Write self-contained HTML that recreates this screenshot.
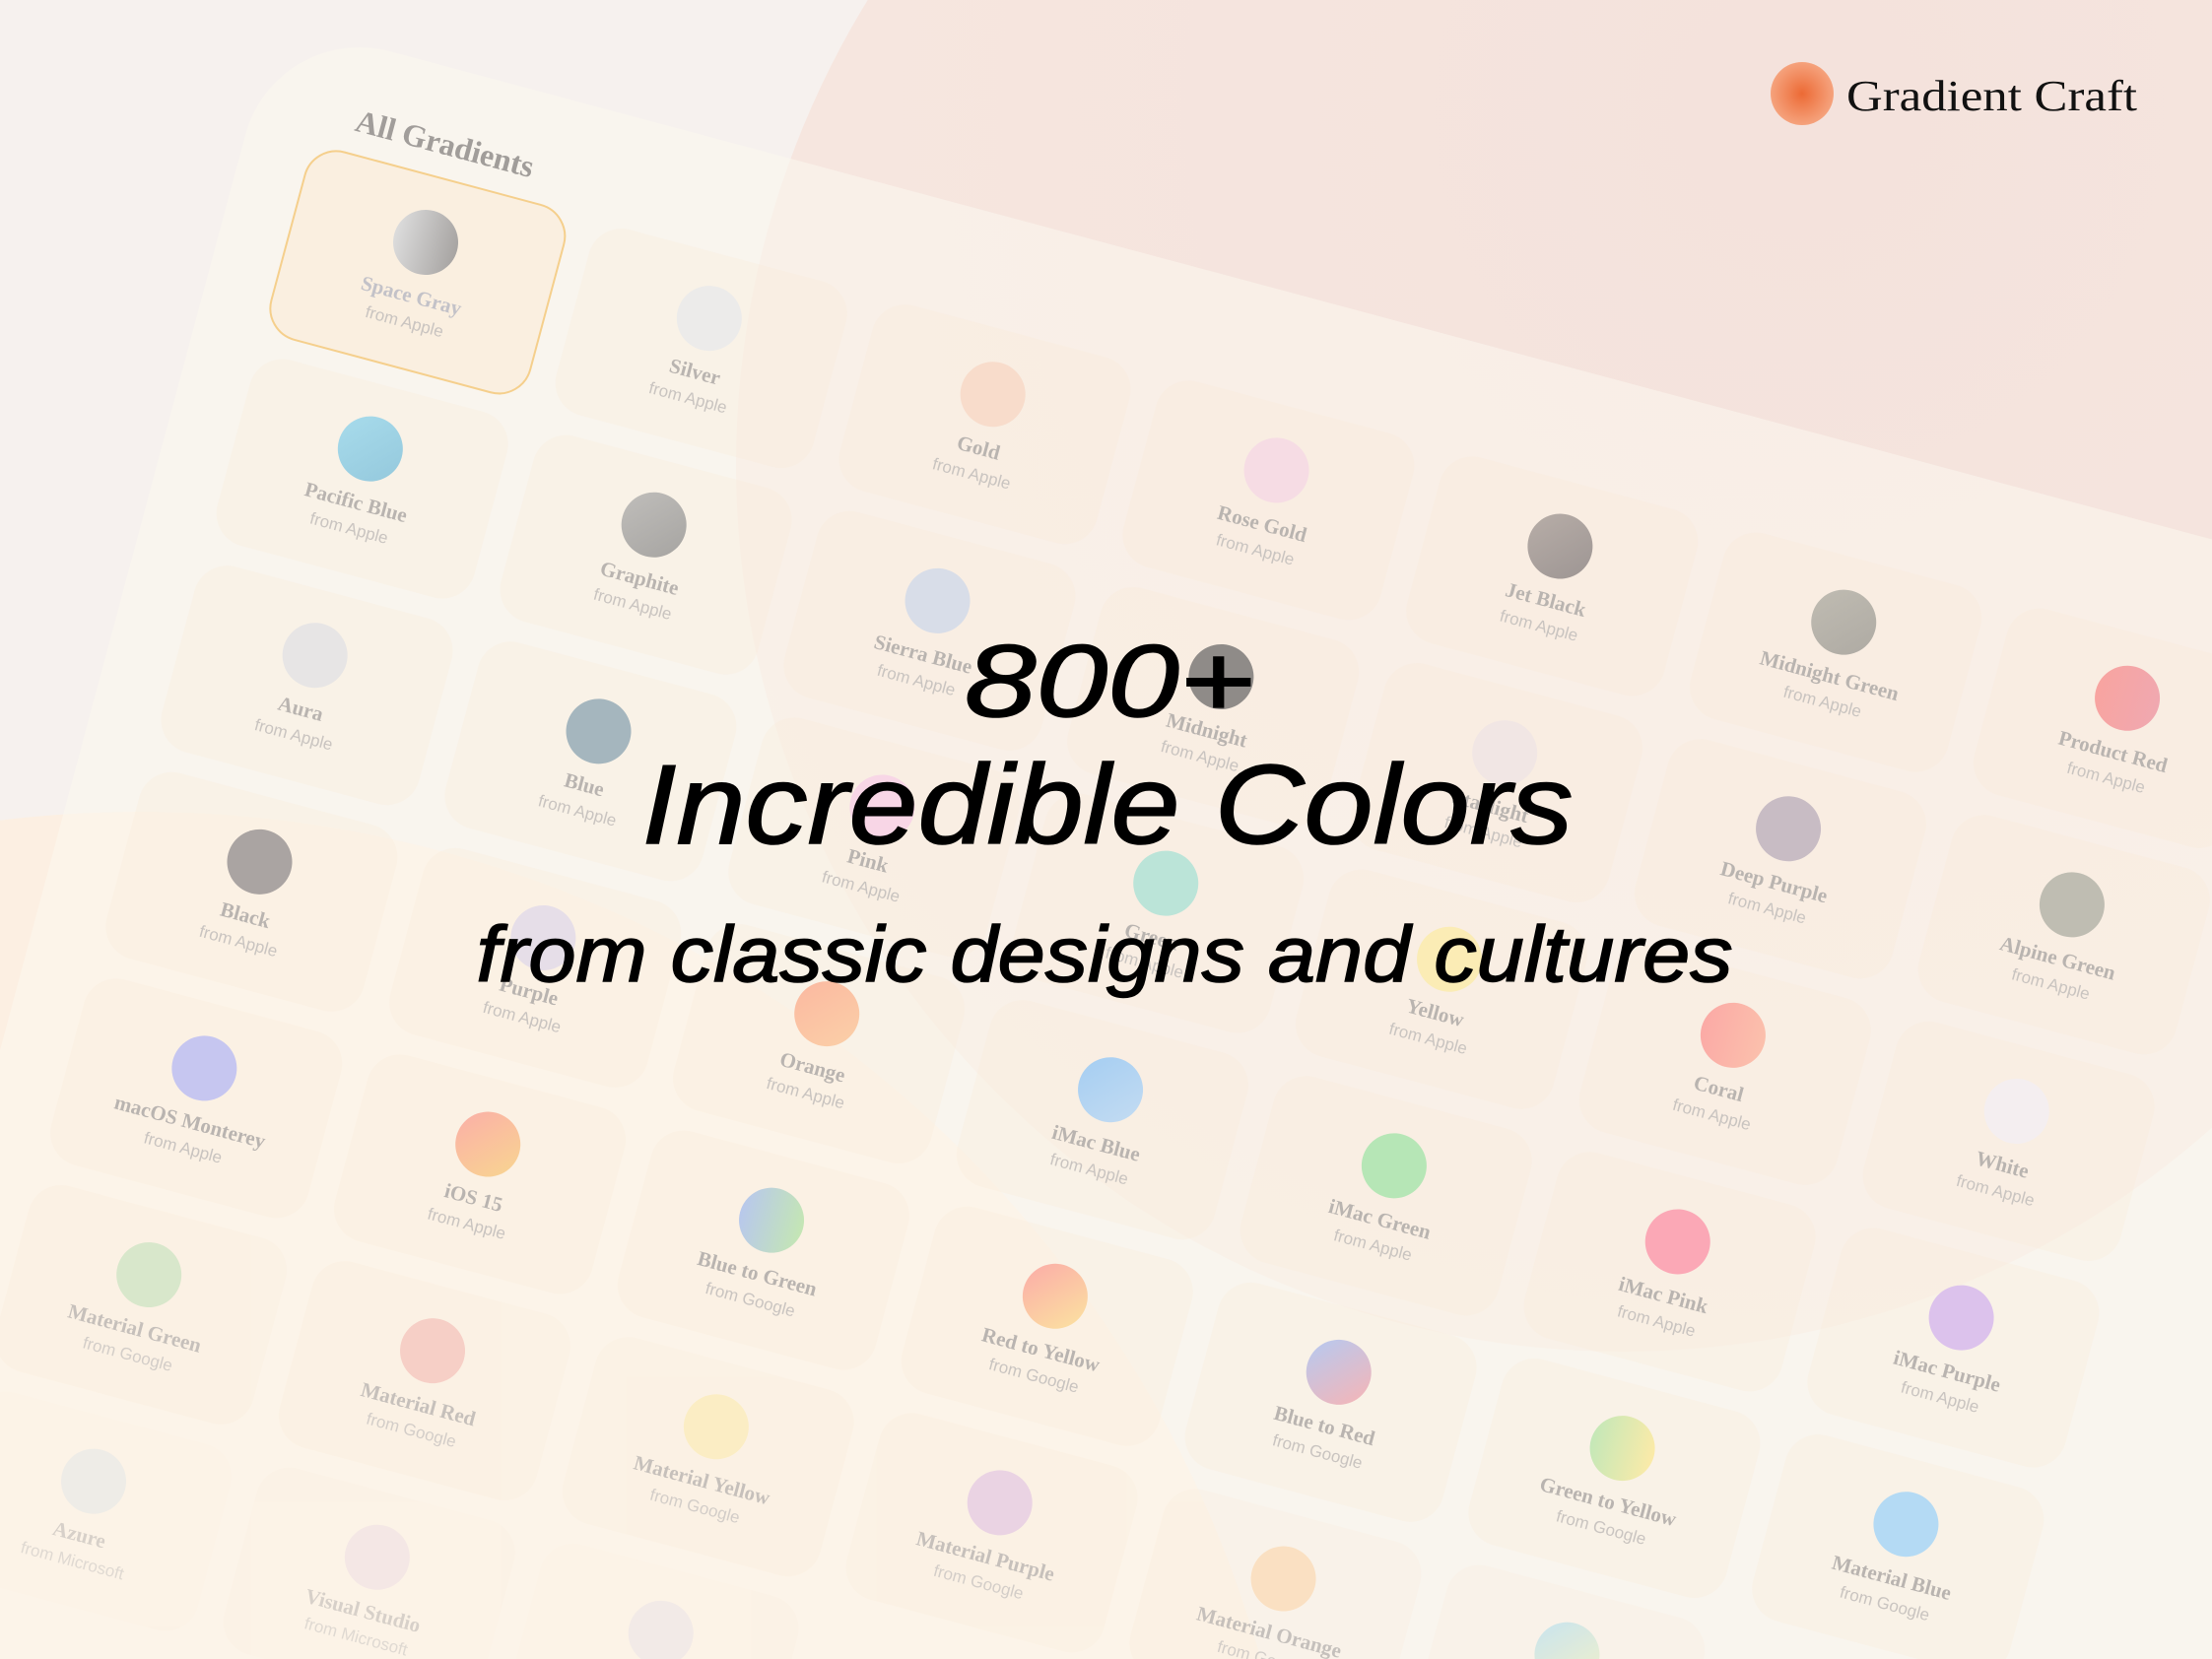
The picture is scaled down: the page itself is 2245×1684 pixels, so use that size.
<!DOCTYPE html>
<html><head><meta charset="utf-8">
<style>
html,body{margin:0;padding:0;width:2245px;height:1684px;overflow:hidden}
#wrap{width:2245px;height:1684px;overflow:hidden;position:relative;background:#f6f1ee;font-family:"Liberation Sans",sans-serif}
.bg{position:absolute;border-radius:50%}
#grid{position:absolute;left:432px;top:246px;transform:rotate(15deg);transform-origin:0 0}
.panel{position:absolute;left:-205px;top:-178px;width:2600px;height:2000px;border-radius:120px;background:rgba(252,247,239,0.55)}
.c{position:absolute;width:270px;height:195px;border-radius:34px;background:rgba(250,232,210,0.22)}
.c i{position:absolute;left:102px;top:33px;width:66px;height:66px;border-radius:50%}
.c b{position:absolute;left:-20px;right:-20px;top:108px;text-align:center;font:bold 21px/28px "Liberation Serif",serif;color:#b9b4b0;white-space:nowrap}
.c s{position:absolute;left:-20px;right:-20px;top:138px;text-align:center;font:17px/24px "Liberation Sans",sans-serif;color:#c9c4c0;text-decoration:none;white-space:nowrap}
.sel{border:2.5px solid #f5cf8c;background:rgba(251,236,218,0.7);margin:-2px}
.title{position:absolute;left:-100px;top:-120px;font:bold 32px "Liberation Serif",serif;color:#a19d9a;white-space:nowrap}
.f1{opacity:.8}.f2{opacity:.55}
</style></head><body><div id="wrap">
<div class="bg" style="left:747px;top:-428px;width:1800px;height:1800px;background:radial-gradient(circle at 60% 30%,#f4e2dc,#f6e6df 60%,#f8ebe2)"></div>
<div class="bg" style="left:-1038px;top:824px;width:2362px;height:2362px;background:#fcefe2"></div>
<div id="grid">
<div class="panel"></div>
<div class="title">All Gradients</div>
<div class="c sel" style="left:-135px;top:-66px"><i style="background:linear-gradient(90deg,#dcdcdc,#a7a4a2)"></i><b style="color:#c3c2c8">Space Gray</b><s>from Apple</s></div>
<div class="c" style="left:163px;top:-66px"><i style="background:#ecebea"></i><b>Silver</b><s>from Apple</s></div>
<div class="c" style="left:461px;top:-66px"><i style="background:#f8dccb"></i><b>Gold</b><s>from Apple</s></div>
<div class="c" style="left:759px;top:-66px"><i style="background:#f6dce4"></i><b>Rose Gold</b><s>from Apple</s></div>
<div class="c" style="left:1057px;top:-66px"><i style="background:linear-gradient(135deg,#b8aea8,#9d9593)"></i><b>Jet Black</b><s>from Apple</s></div>
<div class="c" style="left:1355px;top:-66px"><i style="background:linear-gradient(135deg,#c0bcb2,#aeaaa3)"></i><b>Midnight Green</b><s>from Apple</s></div>
<div class="c" style="left:1653px;top:-66px"><i style="background:linear-gradient(90deg,#f8a4a0,#f0a8b0)"></i><b>Product Red</b><s>from Apple</s></div>

<div class="c" style="left:-135px;top:151px"><i style="background:linear-gradient(135deg,#a8dcec,#94c8dc)"></i><b>Pacific Blue</b><s>from Apple</s></div>
<div class="c" style="left:163px;top:151px"><i style="background:linear-gradient(135deg,#c0bebb,#a6a4a1)"></i><b>Graphite</b><s>from Apple</s></div>
<div class="c" style="left:461px;top:151px"><i style="background:#d8dde8"></i><b>Sierra Blue</b><s>from Apple</s></div>
<div class="c" style="left:759px;top:151px"><i style="background:#8f8b88"></i><b>Midnight</b><s>from Apple</s></div>
<div class="c" style="left:1057px;top:151px"><i style="background:#f1e6e4"></i><b>Starlight</b><s>from Apple</s></div>
<div class="c" style="left:1355px;top:151px"><i style="background:#c8bcc4"></i><b>Deep Purple</b><s>from Apple</s></div>
<div class="c" style="left:1653px;top:151px"><i style="background:#bfbdb2"></i><b>Alpine Green</b><s>from Apple</s></div>

<div class="c" style="left:-135px;top:368px"><i style="background:#e7e5e5"></i><b>Aura</b><s>from Apple</s></div>
<div class="c" style="left:163px;top:368px"><i style="background:#a5b6be"></i><b>Blue</b><s>from Apple</s></div>
<div class="c" style="left:461px;top:368px"><i style="background:#f8d6e6"></i><b>Pink</b><s>from Apple</s></div>
<div class="c" style="left:759px;top:368px"><i style="background:#bbe4d8"></i><b>Green</b><s>from Apple</s></div>
<div class="c" style="left:1057px;top:368px"><i style="background:#fbecb5"></i><b>Yellow</b><s>from Apple</s></div>
<div class="c" style="left:1355px;top:368px"><i style="background:linear-gradient(90deg,#fbaaa6,#fbc0ac)"></i><b>Coral</b><s>from Apple</s></div>
<div class="c" style="left:1653px;top:368px"><i style="background:#f4eef0"></i><b>White</b><s>from Apple</s></div>

<div class="c" style="left:-135px;top:585px"><i style="background:#aaa4a2"></i><b>Black</b><s>from Apple</s></div>
<div class="c" style="left:163px;top:585px"><i style="background:#e6dee8"></i><b>Purple</b><s>from Apple</s></div>
<div class="c" style="left:461px;top:585px"><i style="background:linear-gradient(135deg,#fbb8a0,#fbd0a8)"></i><b>Orange</b><s>from Apple</s></div>
<div class="c" style="left:759px;top:585px"><i style="background:linear-gradient(135deg,#a4cdf2,#c4dcf2)"></i><b>iMac Blue</b><s>from Apple</s></div>
<div class="c" style="left:1057px;top:585px"><i style="background:#b6e6b6"></i><b>iMac Green</b><s>from Apple</s></div>
<div class="c" style="left:1355px;top:585px"><i style="background:#fba8b6"></i><b>iMac Pink</b><s>from Apple</s></div>
<div class="c" style="left:1653px;top:585px"><i style="background:#dcc2ec"></i><b>iMac Purple</b><s>from Apple</s></div>

<div class="c" style="left:-135px;top:802px"><i style="background:#c6c6f0"></i><b>macOS Monterey</b><s>from Apple</s></div>
<div class="c" style="left:163px;top:802px"><i style="background:linear-gradient(135deg,#fbaea8,#f8d690)"></i><b>iOS 15</b><s>from Apple</s></div>
<div class="c" style="left:461px;top:802px"><i style="background:linear-gradient(90deg,#b8c8ec,#c4e6b4)"></i><b>Blue to Green</b><s>from Google</s></div>
<div class="c" style="left:759px;top:802px"><i style="background:linear-gradient(135deg,#fbaaa8,#fbe4a0)"></i><b>Red to Yellow</b><s>from Google</s></div>
<div class="c" style="left:1057px;top:802px"><i style="background:linear-gradient(135deg,#b4caf2,#f8b4b4)"></i><b>Blue to Red</b><s>from Google</s></div>
<div class="c" style="left:1355px;top:802px"><i style="background:linear-gradient(90deg,#c4e8b8,#fbeaa8)"></i><b>Green to Yellow</b><s>from Google</s></div>
<div class="c" style="left:1653px;top:802px"><i style="background:#b4daf4"></i><b>Material Blue</b><s>from Google</s></div>

<div class="c f1" style="left:-135px;top:1019px"><i style="background:#d0e4c4"></i><b>Material Green</b><s>from Google</s></div>
<div class="c f1" style="left:163px;top:1019px"><i style="background:#f5c6be"></i><b>Material Red</b><s>from Google</s></div>
<div class="c f1" style="left:461px;top:1019px"><i style="background:#fbecbc"></i><b>Material Yellow</b><s>from Google</s></div>
<div class="c f1" style="left:759px;top:1019px"><i style="background:#e6cce2"></i><b>Material Purple</b><s>from Google</s></div>
<div class="c f1" style="left:1057px;top:1019px"><i style="background:#fbdcb8"></i><b>Material Orange</b><s>from Google</s></div>
<div class="c f1" style="left:1355px;top:1019px"><i style="background:linear-gradient(135deg,#bce0f0,#f2f0c0)"></i><b>Gradient</b><s>from Google</s></div>

<div class="c f2" style="left:-135px;top:1236px"><i style="background:#e4e6e6"></i><b>Azure</b><s>from Microsoft</s></div>
<div class="c f2" style="left:163px;top:1236px"><i style="background:#efdde2"></i><b>Visual Studio</b><s>from Microsoft</s></div>
<div class="c f2" style="left:461px;top:1236px"><i style="background:#ebe2e6"></i><b>Windows</b><s>from Microsoft</s></div>
</div>

<div class="bg" style="left:1797px;top:63px;width:64px;height:64px;background:radial-gradient(circle at 50% 50%,#ec6a35,#f49a72 60%,#f8b898)"></div>
<svg width="2245" height="1684" style="position:absolute;left:0;top:0">
<text x="1874" y="112" font-family="Liberation Serif,serif" font-size="44" fill="#111" textLength="295" lengthAdjust="spacingAndGlyphs">Gradient Craft</text>
<g font-family="Liberation Sans,DejaVu Sans,sans-serif" font-style="italic" fill="#000" stroke="#000" stroke-width="1.5" text-anchor="middle">
<text x="1126" y="727" font-size="104" textLength="294" lengthAdjust="spacingAndGlyphs">800+</text>
<text x="1124" y="856" font-size="114" textLength="945" lengthAdjust="spacingAndGlyphs">Incredible Colors</text>
<text x="1121" y="996" font-size="80" textLength="1275" lengthAdjust="spacingAndGlyphs">from classic designs and cultures</text>
</g>
</svg>
</div></body></html>
